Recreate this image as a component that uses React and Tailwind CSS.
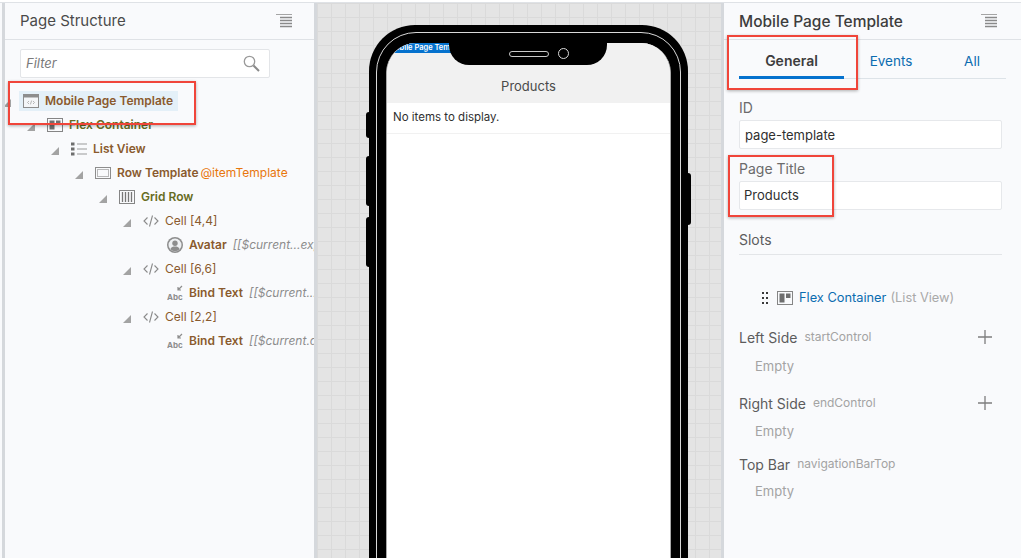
import React from "react";

const treeRows = [
  { indent: "pl-0", icon: "page", label: "Mobile Page Template", labelClass: "font-semibold text-[#8a5a2e]", selected: true },
  { indent: "pl-[24px]", icon: "flex", label: "Flex Container", labelClass: "font-semibold text-[#666b22]" },
  { indent: "pl-[48px]", icon: "list", label: "List View", labelClass: "font-semibold text-[#8a5a2e]" },
  { indent: "pl-[72px]", icon: "row", label: "Row Template", labelClass: "font-semibold text-[#8a5a2e]", slot: "@itemTemplate" },
  { indent: "pl-[96px]", icon: "grid", label: "Grid Row", labelClass: "font-semibold text-[#666b22]" },
  { indent: "pl-[120px]", icon: "code", label: "Cell [4,4]", labelClass: "text-[#8a5a2e]" },
  { indent: "pl-[144px]", icon: "avatar", label: "Avatar", labelClass: "font-semibold text-[#8a5a2e]", leaf: true, note: "[[$current...expression]]" },
  { indent: "pl-[120px]", icon: "code", label: "Cell [6,6]", labelClass: "text-[#8a5a2e]" },
  { indent: "pl-[144px]", icon: "abc", label: "Bind Text", labelClass: "font-semibold text-[#8a5a2e]", leaf: true, note: "[[$current...data.name]]" },
  { indent: "pl-[120px]", icon: "code", label: "Cell [2,2]", labelClass: "text-[#8a5a2e]" },
  { indent: "pl-[144px]", icon: "abc", label: "Bind Text", labelClass: "font-semibold text-[#8a5a2e]", leaf: true, note: "[[$current.data.price]]" },
];

function TreeIcon({ name }) {
  if (name === "page") {
    return (
      <svg width="16" height="16" viewBox="0 0 16 16" className="shrink-0">
        <rect x="0.5" y="1.5" width="15" height="13" fill="#f4f6f8" stroke="#8d8d8d" />
        <rect x="0.5" y="1.5" width="15" height="3" fill="#8d8d8d" />
        <path d="M6 8 4.5 9.5 6 11M10 8l1.500 1.500L10 11M8.600 7.600 7.400 11.400" fill="none" stroke="#a5a5a5" strokeWidth="0.8" />
      </svg>
    );
  }
  if (name === "flex") {
    return (
      <svg width="16" height="16" viewBox="0 0 16 16" className="shrink-0">
        <rect x="0.5" y="1.500" width="15" height="13" fill="none" stroke="#858585" />
        <rect x="2.500" y="3.500" width="5" height="9" fill="#6e6e6e" />
        <rect x="9" y="3.500" width="4.500" height="4.500" fill="#6e6e6e" />
      </svg>
    );
  }
  if (name === "list") {
    return (
      <svg width="16" height="16" viewBox="0 0 16 16" className="shrink-0">
        <path d="M0 1.500h3.500v3H0zM0 6.500h3.500v3H0zM0 11.500h3.500v3H0z" fill="#6e6e6e" />
        <path d="M6 3h10M6 8h10M6 13h10" stroke="#9a9a9a" strokeWidth="1.200" />
      </svg>
    );
  }
  if (name === "row") {
    return (
      <svg width="16" height="16" viewBox="0 0 16 16" className="shrink-0">
        <rect x="0.500" y="2.500" width="15" height="11" fill="none" stroke="#8d8d8d" />
        <rect x="2.500" y="4.500" width="11" height="7" fill="none" stroke="#777" strokeDasharray="1 1" />
      </svg>
    );
  }
  if (name === "grid") {
    return (
      <svg width="16" height="16" viewBox="0 0 16 16" className="shrink-0">
        <rect x="0.500" y="1.500" width="15" height="13" fill="none" stroke="#858585" />
        <path d="M3.500 3v10M6.500 3v10M9.500 3v10M12.500 3v10" stroke="#777" strokeWidth="1.300" />
      </svg>
    );
  }
  if (name === "code") {
    return (
      <svg width="16" height="16" viewBox="0 0 16 16" className="shrink-0">
        <path d="M4.500 4.500 1 8l3.500 3.500M11.500 4.500 15 8l-3.500 3.500M9.500 2.500 6.500 13.500" fill="none" stroke="#8a8a8a" strokeWidth="1.100" />
      </svg>
    );
  }
  if (name === "avatar") {
    return (
      <svg width="16" height="16" viewBox="0 0 16 16" className="shrink-0">
        <circle cx="8" cy="8" r="8" fill="#8d8d8d" />
        <circle cx="8" cy="8" r="6.500" fill="#eef0f2" />
        <circle cx="8" cy="6.300" r="2.700" fill="#8d8d8d" />
        <path d="M3.300 12.300C4.300 10 6 9.600 8 9.600s3.700.4 4.700 2.700A6.500 6.500 0 0 1 3.300 12.300z" fill="#8d8d8d" />
      </svg>
    );
  }
  return (
    <svg width="16" height="16" viewBox="0 0 16 16" className="shrink-0">
      <text x="0" y="15" fontSize="8" fontWeight="700" fontFamily="Inter, sans-serif" fill="#8d8d8d">Abc</text>
      <path d="M15 1 11 5M11 2v3h3" fill="none" stroke="#8d8d8d" strokeWidth="1.200" />
    </svg>
  );
}

function TreeRow({ row }) {
  return (
    <div className={`flex h-6 items-center whitespace-nowrap ${row.indent}`}>
      {row.leaf ? (
        <span className="-ml-0.5 mr-2 w-2 shrink-0" />
      ) : (
        <svg width="8" height="8" viewBox="0 0 8 8" className="-ml-0.5 mr-2 mt-[3px] shrink-0">
          <polygon points="8,0 8,8 0,8" fill="#a3a3a3" />
        </svg>
      )}
      <span className={`flex h-5 items-center gap-1.5 pl-1 ${row.selected ? "bg-[#e4f0f8] pr-[5px]" : "pr-1"}`}>
        <TreeIcon name={row.icon} />
        <span className={row.labelClass}>{row.label}</span>
      </span>
      {row.slot && <span className="-ml-0.5 text-[#e8760c]">{row.slot}</span>}
      {row.note && <span className="ml-[2px] italic text-[#8c8c8c]">{row.note}</span>}
    </div>
  );
}

function MenuIcon() {
  return (
    <svg width="16" height="15" viewBox="0 0 16 15" className="shrink-0">
      <path d="M0 .5h16" stroke="#a5a5a5" />
      <path d="M4 3.500h12M4 6.500h12M4 9.500h12M4 12.500h12" stroke="#8a8a8a" strokeWidth="1.300" />
    </svg>
  );
}

function PlusIcon() {
  return (
    <svg width="14" height="14" viewBox="0 0 14 14" className="shrink-0">
      <path d="M7 0v14M0 7h14" stroke="#7d7d7d" strokeWidth="1.300" />
    </svg>
  );
}

function Field({ label, value, boxClass, valueClass }) {
  return (
    <div className={boxClass}>
      <div className="text-[14px] leading-[16px] text-[#6b6b6b]">{label}</div>
      <div className={`mt-1 flex h-[29px] w-[263px] items-center rounded-[2px] border border-[#e6e8eb] bg-white text-[13px] text-[#2f2f2f] ${valueClass}`}>
        {value}
      </div>
    </div>
  );
}

function SlotGroup({ title, name, plus, boxClass, emptyClass }) {
  return (
    <div className={boxClass}>
      <div className="flex h-4 w-[253px] items-center">
        <span className="text-[14px] text-[#5c5c5c]">{title}</span>
        <span className="ml-[7px] text-[12px] text-[#a3a3a3]">{name}</span>
        {plus && (
          <span className="ml-auto">
            <PlusIcon />
          </span>
        )}
      </div>
      <div className={`pl-4 text-[13px] leading-4 text-[#a3a3a3] ${emptyClass}`}>Empty</div>
    </div>
  );
}

function Phone() {
  return (
    <div className="relative mt-[22px] h-[700px] w-[319px] shrink-0 rounded-[46px] bg-black p-[7px]">
      <span className="absolute left-[-3px] top-[87px] h-[26px] w-[3px] rounded-l-[3px] bg-black" />
      <span className="absolute left-[-3px] top-[131px] h-[50px] w-[3px] rounded-l-[3px] bg-black" />
      <span className="absolute left-[-3px] top-[192px] h-[50px] w-[3px] rounded-l-[3px] bg-black" />
      <span className="absolute right-[-3px] top-[148px] h-[52px] w-[3px] rounded-r-[3px] bg-black" />
      <div className="h-full rounded-[40px] border border-[#d8d8d8] bg-black p-[9px] pt-[10px]">
        <div className="relative h-full overflow-hidden rounded-[30px] border-x border-[#a8a8a8] bg-white">
          <div className="absolute left-0 top-0 h-[10px] w-[70px] bg-[#0572ce] pl-px text-[7.500px] font-semibold leading-[10px] whitespace-nowrap text-white">
            Mobile Page Template
          </div>
          <div className="absolute left-[62px] top-0 flex h-[22px] w-[158px] items-center gap-[9px] rounded-b-[20px] bg-black pb-px pl-[60px]">
            <span className="h-[6px] w-[40px] rounded-full border border-[#c9c9c9]" />
            <span className="h-[11px] w-[11px] rounded-full border border-[#d8d8d8]" />
          </div>
          <div className="flex h-[60px] items-end justify-center bg-[#f1f1f1] pb-[8px] text-[13px] leading-[18px] text-[#4a4a4a]">
            Products
          </div>
          <div className="flex h-[31px] items-center border-b border-[#f1f1f1] pl-[6px] text-[11.500px] text-[#2f2f2f]">
            No items to display.
          </div>
        </div>
      </div>
    </div>
  );
}

export default function App() {
  return (
    <div className="relative flex h-[558px] w-[1021px] flex-col overflow-hidden bg-[#f9fafc] font-[Inter,sans-serif]">
      <div className="h-[3px] shrink-0 border-b border-[#dfe2e6] bg-white" />
      <div className="flex min-h-0 flex-1">
        {/* Page structure */}
        <div className="ml-[2px] w-[312px] shrink-0 overflow-hidden border-l-[3px] border-[#d5d8dc] bg-[#f9fafc]">
          <div className="flex h-[37px] items-center justify-between border-b border-[#dfe2e6] pl-[15px] pr-[22px] pt-px">
            <span className="text-[15px] text-[#4a4a4a]">Page Structure</span>
            <MenuIcon />
          </div>
          <div className="ml-[15px] mt-[9px] flex h-[29px] w-[250px] items-center justify-between rounded-[2px] border border-[#e3e5e8] bg-white pl-[5px] pr-[9px]">
            <span className="text-[13px] italic text-[#7a7a7a]">Filter</span>
            <svg width="17" height="17" viewBox="0 0 17 17" className="shrink-0">
              <circle cx="6.500" cy="6.500" r="5.200" fill="none" stroke="#9a9a9a" strokeWidth="1.300" />
              <path d="m10.500 10.500 5.500 5.500" stroke="#8a8a8a" strokeWidth="2" />
            </svg>
          </div>
          <div className="mt-[11px] text-[12px]">
            {treeRows.map((row, i) => (
              <TreeRow key={i} row={row} />
            ))}
          </div>
        </div>

        {/* Canvas */}
        <div className="flex h-full w-[410px] shrink-0 overflow-hidden border-x-[3px] border-[#d5d8dc] bg-[#e4e4e4] bg-[linear-gradient(to_right,#dadada_1px,transparent_1px),linear-gradient(to_bottom,#dadada_1px,transparent_1px)] bg-size-[14px_14px] pl-[52px]">
          <Phone />
        </div>

        {/* Properties */}
        <div className="min-w-0 flex-1 bg-[#f9fafc]">
          <div className="flex h-[37px] items-center justify-between border-b border-[#dfe2e6] pl-[15px] pr-[24px] pt-px">
            <span className="text-[15.500px] font-medium text-[#3d3d3d]">Mobile Page Template</span>
            <MenuIcon />
          </div>
          <div className="ml-[15px] flex h-[39px] w-[267px] border-b border-[#dde3e8] text-[13.500px]">
            <div className="flex h-[39px] w-[105px] items-center justify-center border-b-[3px] border-[#0572ce] pt-[5px] text-[14px] font-semibold text-[#3d3d3d]">
              General
            </div>
            <div className="flex h-[38px] w-[94px] items-center justify-center pt-[5px] text-[#0b6cb0]">Events</div>
            <div className="flex h-[38px] w-[68px] items-center justify-center pt-[5px] text-[#0b6cb0]">All</div>
          </div>
          <div className="pl-[15px]">
            <Field label="ID" value="page-template" boxClass="mt-[21px]" valueClass="pl-[5px] pt-[2px]" />
            <Field label="Page Title" value="Products" boxClass="mt-[12px]" valueClass="pl-[4px]" />
            <div className="mt-[22px] w-[263px] border-b border-[#e3e5e8] pb-[6px] text-[14px] leading-[16px] text-[#5c5c5c]">
              Slots
            </div>
            <div className="mt-[35px] flex h-4 items-center pl-[23px] text-[12.800px]">
              <svg width="6" height="14" viewBox="0 0 6 14" className="shrink-0">
                <path d="M0 1h2v2H0zM4 1h2v2H4zM0 6h2v2H0zM4 6h2v2H4zM0 11h2v2H0zM4 11h2v2H4z" fill="#3a3a3a" />
              </svg>
              <span className="ml-[9px]">
                <TreeIcon name="flex" />
              </span>
              <span className="ml-[6px] text-[#0b6cb0]">Flex Container</span>
              <span className="ml-1 text-[#a9a9a9]">(List View)</span>
            </div>
            <SlotGroup title="Left Side" name="startControl" plus boxClass="mt-[23px]" emptyClass="mt-[13px]" />
            <SlotGroup title="Right Side" name="endControl" plus boxClass="mt-[21px]" emptyClass="mt-[12px]" />
            <SlotGroup title="Top Bar" name="navigationBarTop" boxClass="mt-[17px]" emptyClass="mt-[11px]" />
          </div>
        </div>
      </div>

      {/* Annotation boxes over the screenshot */}
      <div className="absolute left-[8px] top-[81px] h-[44px] w-[188px] border-2 border-[#f0453a] shadow-[0_1px_3px_rgba(0,0,0,0.3)]" />
      <div className="absolute left-[727px] top-[35px] h-[55px] w-[131px] border-2 border-[#f0453a] shadow-[0_1px_3px_rgba(0,0,0,0.3)]" />
      <div className="absolute left-[728px] top-[155px] h-[62px] w-[106px] border-2 border-[#f0453a] shadow-[0_1px_3px_rgba(0,0,0,0.3)]" />
    </div>
  );
}
